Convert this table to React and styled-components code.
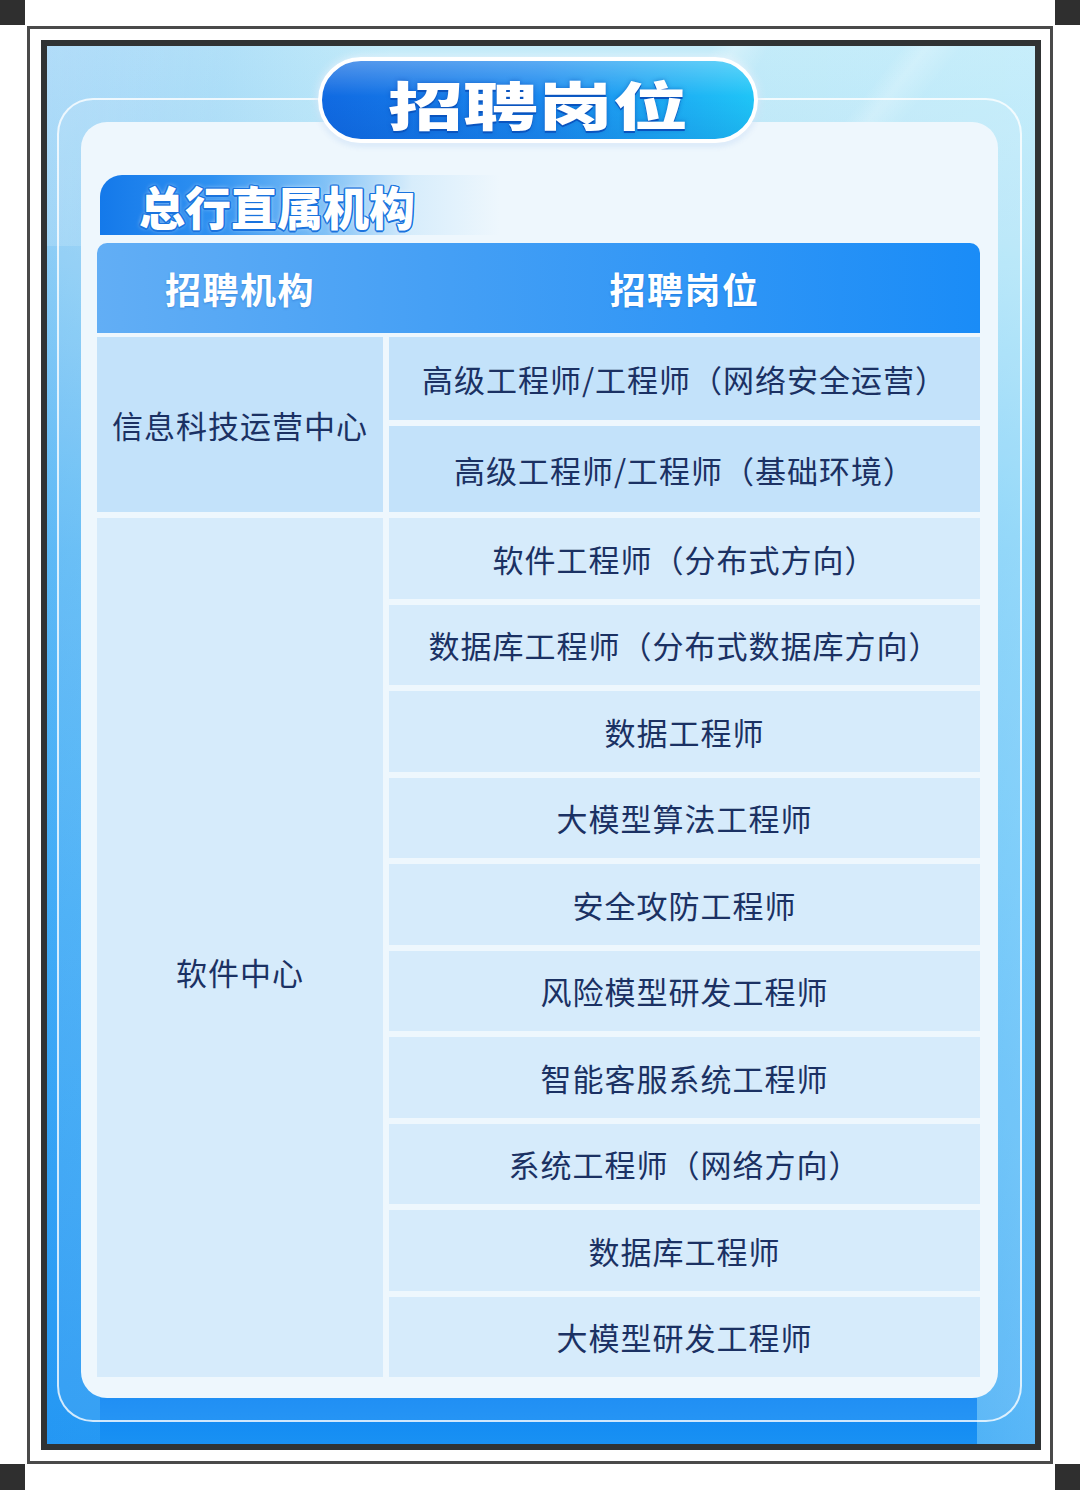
import React from 'react';
import styled, { createGlobalStyle } from 'styled-components';

const Global = createGlobalStyle`
  html, body { margin: 0; padding: 0; background: #fff; }
  body { font-family: "Noto Sans CJK SC", "Noto Sans", sans-serif; }
  * { box-sizing: border-box; }
`;

const Page = styled.div`
  width: 1080px;
  height: 1490px;
  padding: 26px 0 0 27px;
  background:
    linear-gradient(#2f2f2f, #2f2f2f) 0 0 / 25px 25px no-repeat,
    linear-gradient(#2f2f2f, #2f2f2f) 100% 0 / 25px 25px no-repeat,
    linear-gradient(#2f2f2f, #2f2f2f) 0 100% / 25px 26px no-repeat,
    linear-gradient(#2f2f2f, #2f2f2f) 100% 100% / 25px 26px no-repeat,
    #fff;
`;

const OuterFrame = styled.div`
  width: 1026px;
  height: 1438px;
  border: 3px solid #4a4a4a;
  padding: 11px 9px 11px 11px;
  background: #fff;
`;

const InnerFrame = styled.div`
  position: relative;
  width: 1000px;
  height: 1410px;
  border: 6px solid #303334;
  padding: 52px 13px 22px 10px;
  background:
    linear-gradient(#0e86f4, #1991f3) 53px 100% / 877px 46px no-repeat,
    linear-gradient(118deg, transparent 58%, rgba(255,255,255,0.28) 60%, transparent 63%) 0 0 / 100% 300px no-repeat,
    linear-gradient(128deg, transparent 70%, rgba(255,255,255,0.22) 72%, transparent 75%) 0 0 / 100% 300px no-repeat,
    linear-gradient(100deg, rgba(255,255,255,0.2) 0%, transparent 18%) 0 0 / 100% 200px no-repeat,
    linear-gradient(90deg, rgba(10,120,240,0.2) 0%, rgba(10,120,240,0) 35%, rgba(255,255,255,0) 70%, rgba(210,245,255,0.28) 100%),
    linear-gradient(180deg, #c3ebf9 0%, #aee2f7 14%, #72c9f7 36%, #4fb8f8 62%, #2b9ff4 100%);
`;

const TitlePill = styled.div`
  position: absolute;
  z-index: 2;
  top: 11px;
  left: calc(50% - 3px);
  transform: translateX(-50%);
  width: 440px;
  height: 86px;
  border-radius: 43px;
  border: 4px solid #fff;
  box-shadow: 0 0 8px rgba(255, 255, 255, 0.9), 0 2px 6px rgba(20, 110, 220, 0.25);
  background:
    linear-gradient(180deg, rgba(255,255,255,0.28) 0%, rgba(255,255,255,0) 45%, rgba(0,50,160,0.12) 100%),
    linear-gradient(90deg, #106ae2 0%, #1b8aef 50%, #1fc5f7 100%);
  display: flex;
  align-items: center;
  justify-content: center;
`;

const TitleText = styled.h1`
  margin: 0;
  padding-top: 5px;
  font-family: "Noto Sans CJK SC", sans-serif;
  font-weight: 900;
  font-size: 60px;
  line-height: 1;
  letter-spacing: 0;
  color: #fff;
  transform: scale(1.25, 0.88);
  text-shadow: 0 3px 0 #0a54bf, 0 0 4px rgba(5, 60, 170, 0.5);
`;

const Outline = styled.div`
  height: 100%;
  border: 2px solid rgba(255, 255, 255, 0.78);
  border-radius: 36px;
  padding: 22px;
  background: rgba(255, 255, 255, 0.08);
`;

const Card = styled.div`
  height: 100%;
  border-radius: 26px;
  background: #eef7fd;
  padding: 53px 18px 21px 16px;
  display: flex;
  flex-direction: column;
`;

const SectionTab = styled.div`
  height: 60px;
  width: 400px;
  margin-left: 3px;
  margin-bottom: 8px;
  border-radius: 22px 0 0 0;
  padding-left: 39px;
  background: linear-gradient(90deg, #1479ea 0%, #2f91f1 28%, #7cbff6 55%, rgba(200,230,250,0.6) 78%, rgba(238,247,253,0) 100%);
  display: flex;
  align-items: center;
`;

const SectionText = styled.h2`
  margin: 0;
  font-family: "Noto Sans CJK SC", sans-serif;
  font-weight: 900;
  font-size: 46px;
  line-height: 1;
  color: #fff;
  text-shadow:
    1.5px 0 0 #1a73de, -1.5px 0 0 #1a73de, 0 1.5px 0 #1a73de, 0 -1.5px 0 #1a73de,
    1px 1px 0 #1a73de, -1px -1px 0 #1a73de, 1px -1px 0 #1a73de, -1px 1px 0 #1a73de,
    0 0 5px rgba(255, 255, 255, 0.7);
`;

const HeaderRow = styled.div`
  height: 90px;
  margin-bottom: 4px;
  border-radius: 10px 10px 0 0;
  background: linear-gradient(90deg, #62aef5 0%, #449ff5 40%, #1a8cf7 100%);
  display: grid;
  grid-template-columns: 286px 1fr;
  column-gap: 6px;
`;

const HeaderCell = styled.div`
  display: flex;
  align-items: center;
  justify-content: center;
  font-weight: 700;
  font-size: 36px;
  letter-spacing: 1.5px;
  color: #fff;
  text-shadow: 0 1px 2px rgba(10, 80, 180, 0.35);
`;

const Body = styled.div`
  flex: 1;
  display: grid;
  grid-template-columns: 286px 1fr;
  grid-template-rows: 83px 86px repeat(10, 1fr);
  gap: 6px;
`;

const Cell = styled.div`
  grid-row: ${(p) => p.$row} / span ${(p) => p.$span || 1};
  grid-column: ${(p) => p.$col};
  background: ${(p) => (p.$tone === 'deep' ? '#c3e2fa' : '#d6ebfb')};
  display: flex;
  align-items: center;
  justify-content: center;
  padding-top: ${(p) => p.$offset || 0}px;
  font-size: 31px;
  font-weight: 400;
  letter-spacing: 1px;
  color: #1b3163;
  white-space: nowrap;
`;

const groups = [
  {
    name: '信息科技运营中心',
    tone: 'deep',
    offset: 0,
    jobs: ['高级工程师/工程师（网络安全运营）', '高级工程师/工程师（基础环境）'],
  },
  {
    name: '软件中心',
    tone: 'light',
    offset: 48,
    jobs: [
      '软件工程师（分布式方向）',
      '数据库工程师（分布式数据库方向）',
      '数据工程师',
      '大模型算法工程师',
      '安全攻防工程师',
      '风险模型研发工程师',
      '智能客服系统工程师',
      '系统工程师（网络方向）',
      '数据库工程师',
      '大模型研发工程师',
    ],
  },
];

export default function App() {
  let row = 1;
  const cells = [];
  groups.forEach((g) => {
    cells.push(
      <Cell key={g.name} $col={1} $row={row} $span={g.jobs.length} $tone={g.tone} $offset={g.offset}>
        {g.name}
      </Cell>
    );
    g.jobs.forEach((j, i) => {
      cells.push(
        <Cell key={g.name + i} $col={2} $row={row + i} $tone={g.tone}>
          {j}
        </Cell>
      );
    });
    row += g.jobs.length;
  });

  return (
    <>
      <Global />
      <Page>
        <OuterFrame>
          <InnerFrame>
            <TitlePill>
              <TitleText>招聘岗位</TitleText>
            </TitlePill>
            <Outline>
              <Card>
                <SectionTab>
                  <SectionText>总行直属机构</SectionText>
                </SectionTab>
                <HeaderRow>
                  <HeaderCell>招聘机构</HeaderCell>
                  <HeaderCell>招聘岗位</HeaderCell>
                </HeaderRow>
                <Body>{cells}</Body>
              </Card>
            </Outline>
          </InnerFrame>
        </OuterFrame>
      </Page>
    </>
  );
}
